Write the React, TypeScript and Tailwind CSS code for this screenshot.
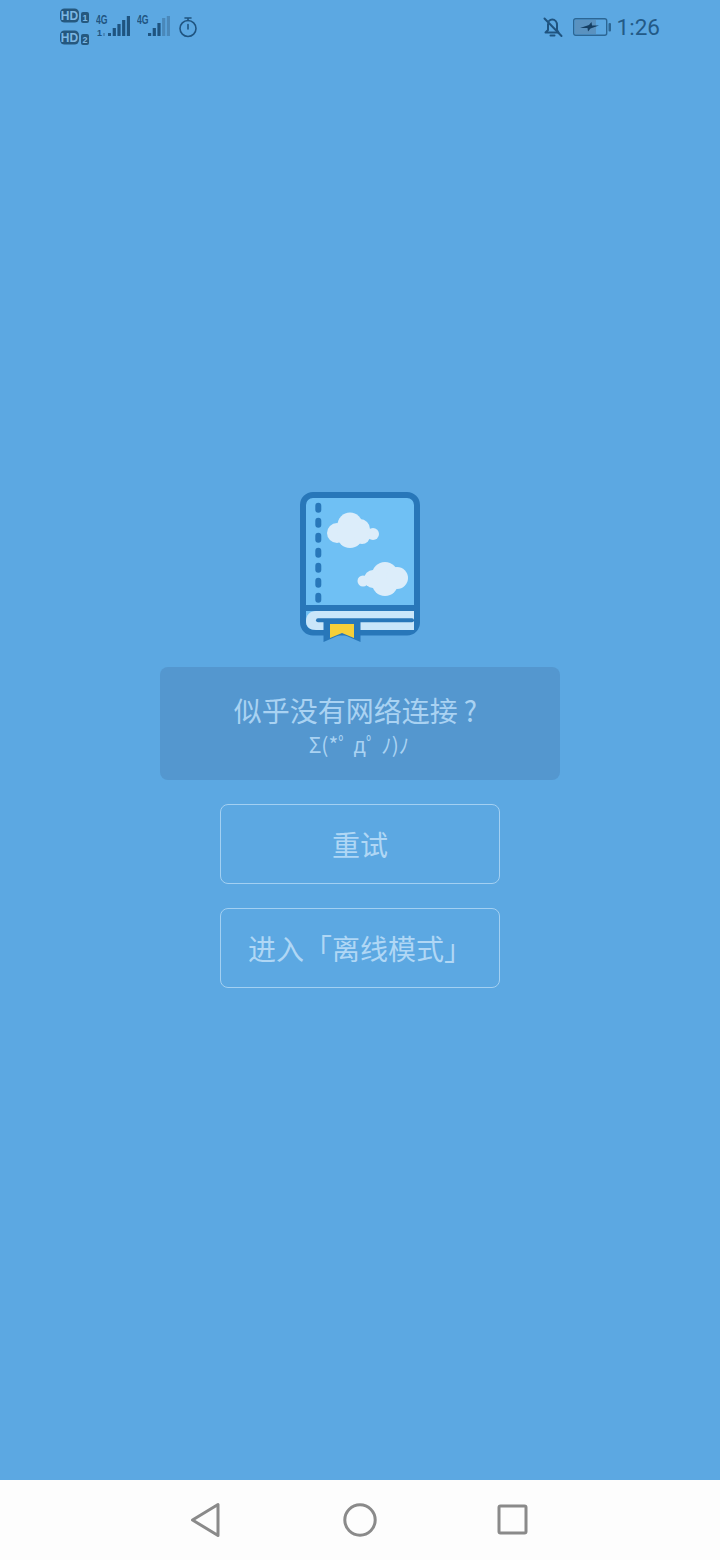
const cjk = "font-['Noto_Sans_CJK_SC','Noto_Sans',sans-serif]";

function SignalBars({ levels }: { levels: number[] }) {
  return (
    <>
      {levels.map((h, i) => (
        <rect
          key={i}
          x={i * 4.700}
          y={20 - Math.abs(h)}
          width="3.200"
          height={Math.abs(h)}
          fill={h < 0 ? "#4a88ba" : "#1f5480"}
        />
      ))}
    </>
  );
}

function FourG() {
  return (
    <text x="0" y="12" fontSize="12" fontWeight="700" fontFamily="Liberation Sans" fill="#1f5480" textLength="11.500" lengthAdjust="spacingAndGlyphs">
      4G
    </text>
  );
}

function HdBadge({ n }: { n: string }) {
  return (
    <svg width="31" height="16" viewBox="0 0 31 16">
      <rect x="0" y="0.500" width="19" height="14" rx="4.500" fill="#25587f" />
      <text x="9.500" y="12" textAnchor="middle" fontSize="12" fontWeight="700" fontFamily="Liberation Sans" fill="#7db7e4">
        HD
      </text>
      <rect x="21" y="4" width="8" height="11" rx="2" fill="#25587f" />
      <text x="25" y="13" textAnchor="middle" fontSize="9" fontWeight="700" fontFamily="Liberation Sans" fill="#7db7e4">
        {n}
      </text>
    </svg>
  );
}

function StatusBar() {
  return (
    <div className="flex h-[54px] items-center justify-between px-[60px]">
      <div className="flex items-center">
        <div className="flex flex-col gap-[6px] pb-[1px]">
          <HdBadge n="1" />
          <HdBadge n="2" />
        </div>
        <svg className="ml-[5px]" width="36" height="30" viewBox="0 0 36 30">
          <FourG />
          <text x="1" y="24" fontSize="9" fontWeight="700" fontFamily="Liberation Sans" fill="#1f5480">1</text>
          <rect x="7" y="21" width="2" height="3" fill="#4a88ba" />
          <g transform="translate(12 5)">
            <rect x="0" y="16" width="3" height="3" fill="#1f5480" />
            <g transform="translate(4.700 -1)">
              <SignalBars levels={[8, 12, 16, 20]} />
            </g>
          </g>
        </svg>
        <svg className="ml-[5px]" width="36" height="30" viewBox="0 0 36 30">
          <FourG />
          <g transform="translate(11 4)">
            <SignalBars levels={[3, 8, 13, -18, -20]} />
          </g>
        </svg>
        <svg className="ml-[5px]" width="20" height="22" viewBox="0 0 20 22" fill="none" stroke="#1f5480" strokeWidth="1.600">
          <circle cx="10" cy="12.500" r="8" />
          <path d="M7 2h6M10 2v2.500M10 8.500v4.500" strokeLinecap="round" />
        </svg>
      </div>
      <div className="flex items-center">
        <svg width="20" height="22" viewBox="0 0 20 22" fill="none" stroke="#1f5480" strokeWidth="2" strokeLinecap="round" strokeLinejoin="round">
          <path d="M2.500 16.500h13l-1.500-2.500V9c0-3-2-5.500-4.700-5.500-1.300 0-2.400.5-3.200 1.400M5 8v6l-2.500 2.500" />
          <path d="M7.500 19.500h4M1.500 2.500l17 17.500" />
        </svg>
        <svg className="ml-[10px] mr-[6px]" width="38" height="18" viewBox="0 0 38 18">
          <rect x="0.700" y="0.700" width="33" height="16.600" rx="2" fill="none" stroke="#2c6694" strokeWidth="1.400" />
          <rect x="2" y="2" width="21" height="14" fill="#5a92c0" />
          <rect x="35.500" y="5" width="2.500" height="8.500" rx="1" fill="#2c6694" />
          <path d="M7 10l9-3 2.500-3 .5 3.500h7l-8.500 3-2.500 3-.5-3.500z" fill="#153f63" />
        </svg>
        <span className="font-['Roboto',sans-serif] text-[22.500px] leading-none text-[#235a87]">1:26</span>
      </div>
    </div>
  );
}

function BookLogo() {
  return (
    <svg width="140" height="165" viewBox="0 0 140 165" className="block">
      <rect x="13" y="10" width="114" height="137.500" rx="10" fill="#6fc0f4" stroke="#2877b9" strokeWidth="6" />
      {[22.700, 37.700, 52.700, 67.700, 82.700, 97.700, 112.700].map((y) => (
        <rect key={y} x="25.300" y={y - 5} width="6" height="10" rx="3" fill="#2877b9" />
      ))}
      <g fill="#dcedfa">
        <circle cx="47" cy="48" r="10" />
        <circle cx="60" cy="40" r="12.500" />
        <circle cx="60" cy="50" r="13" />
        <circle cx="70" cy="44" r="10" />
        <circle cx="72" cy="51" r="8" />
        <circle cx="83" cy="49" r="6" />
        <circle cx="73" cy="96" r="5.500" />
        <circle cx="83" cy="94" r="9" />
        <circle cx="95" cy="90" r="13" />
        <circle cx="95" cy="98" r="13" />
        <circle cx="107" cy="93" r="11" />
      </g>
      <rect x="12" y="120" width="116" height="6" fill="#2877b9" />
      <path d="M16 136c0-6 4-10 10-10h98v19H26c-6 0-10-3-10-9z" fill="#c9e6fa" />
      <rect x="26" y="133.300" width="98" height="4" rx="2" fill="#2877b9" />
      <path d="M33.500 135h37v22l-18.500-8-18.500 8z" fill="#2877b9" />
      <path d="M40 139h24v14l-12-5-12 5z" fill="#f6cf38" />
    </svg>
  );
}

function OutlineButton({ children }: { children: string }) {
  return (
    <button
      type="button"
      className={`flex h-[80px] w-[280px] items-center justify-center rounded-[8px] border border-[#a3d0f2] text-[28px] leading-none text-[#b0d7f5] ${cjk}`}
    >
      {children}
    </button>
  );
}

function NavBar() {
  return (
    <div className="flex h-[80px] items-center bg-[#fdfdfd] pl-[190px]">
      <svg width="32" height="36" viewBox="0 0 32 36" fill="none" stroke="#8a8a8a" strokeWidth="3" strokeLinejoin="round">
        <path d="M28 2.500v31L2.500 18z" />
      </svg>
      <svg className="ml-[121px]" width="34" height="34" viewBox="0 0 34 34" fill="none" stroke="#8a8a8a" strokeWidth="3">
        <circle cx="17" cy="17" r="15.200" />
      </svg>
      <svg className="ml-[120px]" width="32" height="32" viewBox="0 0 32 32" fill="none" stroke="#8a8a8a" strokeWidth="3" strokeLinejoin="round">
        <rect x="2" y="2" width="27" height="27" rx="1.500" />
      </svg>
    </div>
  );
}

export default function App() {
  return (
    <div className="flex h-[1560px] w-[720px] flex-col bg-[#5ca8e2]">
      <StatusBar />
      <main className="flex flex-1 flex-col items-center pt-[431px]">
        <BookLogo />
        <div className="mt-[17px] flex h-[113px] w-[400px] flex-col items-center rounded-[8px] bg-[#5497cf] pt-[25px] text-[#a9d2f2]">
          <p className={`pr-[9px] text-[28px] leading-[36px] ${cjk}`}>
            似乎没有网络连接<span className="ml-[6px]">?</span>
          </p>
          <p className={`mt-[2px] pr-[2px] text-[21px] leading-[28px] ${cjk}`}>Σ(*ﾟ дﾟ ﾉ)ﾉ</p>
        </div>
        <div className="mt-[24px] flex flex-col gap-[24px]">
          <OutlineButton>重试</OutlineButton>
          <OutlineButton>进入「离线模式」</OutlineButton>
        </div>
      </main>
      <NavBar />
    </div>
  );
}
